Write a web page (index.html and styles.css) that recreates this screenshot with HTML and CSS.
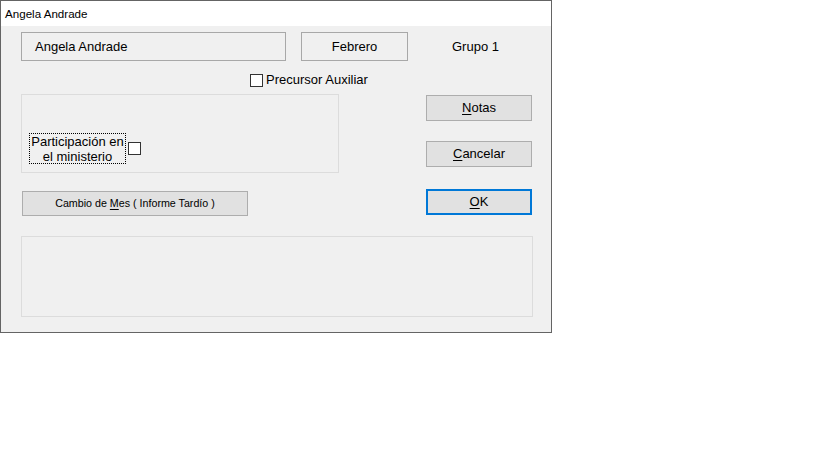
FILE: index.html
```html
<!DOCTYPE html>
<html lang="es">
<head>
<meta charset="utf-8">
<title>Angela Andrade</title>
<link rel="stylesheet" href="styles.css">
</head>
<body>
<div class="window">
  <div class="titlebar">Angela Andrade</div>
  <div class="client">
    <div class="row-top">
      <div class="field name">Angela Andrade</div>
      <div class="field month">Febrero</div>
      <div class="group-label">Grupo 1</div>
    </div>
    <div class="row-check">
      <label class="check"><span class="box"></span>Precursor Auxiliar</label>
    </div>
    <div class="middle">
      <div class="left">
        <div class="groupbox">
          <div class="part">
            <span class="focus">Participación en<br>el ministerio</span><span class="box"></span>
          </div>
        </div>
        <div class="btn wide">Cambio de <u>M</u>es ( Informe Tardío )</div>
      </div>
      <div class="right">
        <div class="btn"><u>N</u>otas</div>
        <div class="btn cancel"><u>C</u>ancelar</div>
        <div class="btn ok"><u>O</u>K</div>
      </div>
    </div>
    <div class="panel"></div>
  </div>
</div>
</body>
</html>
```

FILE: styles.css
```css
html, body {
  margin: 0;
  padding: 0;
  background: #ffffff;
}
body {
  font-family: "Liberation Sans", Arial, sans-serif;
  font-size: 13px;
  color: #000;
}
.window {
  width: 552px;
  height: 333px;
  box-sizing: border-box;
  border: 1px solid #646464;
  background: #f0f0f0;
  display: flex;
  flex-direction: column;
}
.titlebar {
  height: 25px;
  background: #ffffff;
  font-size: 11.6px;
  line-height: 25px;
  padding-left: 4px;
}
.client {
  flex: 1;
  padding-left: 20px;
  background: #f0f0f0;
}
.row-top {
  display: flex;
  align-items: center;
  margin-top: 6px;
  height: 29px;
}
.field {
  box-sizing: border-box;
  height: 29px;
  border: 1px solid #a8a8a8;
  line-height: 27px;
}
.name {
  width: 265px;
  padding-left: 13px;
}
.month {
  width: 107px;
  margin-left: 15px;
  text-align: center;
}
.group-label {
  margin-left: 44px;
}
.row-check {
  margin-top: 12px;
  padding-left: 229px;
  height: 14px;
}
.check {
  display: flex;
  align-items: center;
  line-height: 14px;
}
.box {
  display: inline-block;
  box-sizing: border-box;
  width: 13px;
  height: 13px;
  border: 1px solid #333333;
  background: #ffffff;
  margin-right: 3px;
}
.middle {
  display: flex;
  margin-top: 7px;
}
.left {
  width: 318px;
}
.groupbox {
  box-sizing: border-box;
  height: 79px;
  border: 1px solid #dcdcdc;
  padding-top: 38px;
  padding-left: 7px;
}
.part {
  display: flex;
  align-items: center;
}
.focus {
  box-sizing: border-box;
  display: inline-block;
  width: 97px;
  height: 31px;
  border: 1px dotted #000;
  text-align: center;
  line-height: 15px;
}
.part .box {
  margin-left: 2px;
}
.btn {
  box-sizing: border-box;
  width: 106px;
  height: 26px;
  border: 1px solid #adadad;
  background: #e1e1e1;
  text-align: center;
  line-height: 24px;
}
.btn u {
  text-decoration: underline;
  text-underline-offset: 2px;
}
.wide {
  width: 226px;
  height: 25px;
  line-height: 23px;
  margin-top: 18px;
  margin-left: 1px;
  font-size: 10.7px;
}
.right {
  margin-left: 87px;
  padding-top: 1px;
}
.cancel {
  margin-top: 20px;
}
.ok {
  margin-top: 22px;
  border: 2px solid #0078d7;
  line-height: 22px;
}
.panel {
  box-sizing: border-box;
  width: 512px;
  height: 81px;
  margin-top: 20px;
  border: 1px solid #dcdcdc;
}
```
